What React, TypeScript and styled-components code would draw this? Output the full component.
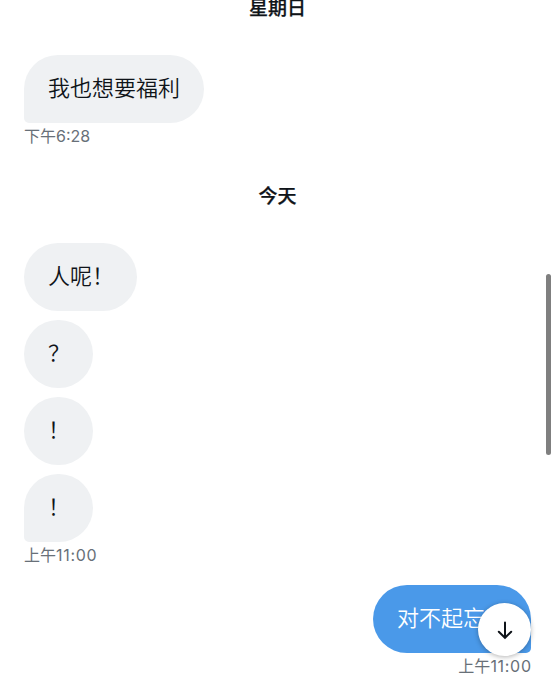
import React from 'react';
import styled, { createGlobalStyle } from 'styled-components';

const Global = createGlobalStyle`
  * { box-sizing: border-box; }
  body { margin: 0; background: #fff; overflow: hidden; }
`;

const Screen = styled.main`
  position: relative;
  display: flex;
  flex-direction: column;
  width: 555px;
  height: 680px;
  padding: 0 24px;
  overflow: hidden;
  background: #fff;
  color: #0f1419;
  font-family: Inter, 'Noto Sans CJK SC', sans-serif;
`;

const DayHeading = styled.h2<{ $gap: number }>`
  margin: ${(p) => p.$gap}px 0 0;
  height: 28px;
  line-height: 28px;
  text-align: center;
  font-size: 19px;
  font-weight: 500;
  -webkit-text-stroke: 0.25px currentColor;
`;

const Group = styled.section<{ $gap: number; $sent?: boolean }>`
  display: flex;
  flex-direction: column;
  align-items: ${(p) => (p.$sent ? 'flex-end' : 'flex-start')};
  gap: 9px;
  margin-top: ${(p) => p.$gap}px;
`;

const Bubble = styled.div<{ $width: number; $last?: boolean; $sent?: boolean }>`
  width: ${(p) => p.$width}px;
  height: 68px;
  padding: 0 24px;
  line-height: 67px;
  font-size: 22px;
  font-weight: 350;
  white-space: nowrap;
  color: ${(p) => (p.$sent ? '#fff' : '#0f1419')};
  background: ${(p) => (p.$sent ? '#4a99e9' : '#eff1f3')};
  border-radius: ${(p) => (p.$sent ? '34px 34px 5px 34px' : p.$last ? '34px 34px 34px 5px' : '34px')};
`;

const Time = styled.time<{ $spacing?: number }>`
  display: flex;
  margin-top: -9px;
  height: 26px;
  line-height: 26px;
  font-size: 16px;
  color: #687078;

  span {
    letter-spacing: ${(p) => p.$spacing ?? 0}px;
    margin-right: ${(p) => -(p.$spacing ?? 0)}px;
  }
`;

const ScrollThumb = styled.div`
  position: absolute;
  top: 274px;
  right: 4px;
  width: 5px;
  height: 181px;
  border-radius: 3px;
  background: #7f7f7f;
`;

const JumpButton = styled.button`
  position: absolute;
  left: 478px;
  top: 603px;
  display: grid;
  place-items: center;
  width: 53px;
  height: 53px;
  padding: 0;
  border: 0;
  border-radius: 50%;
  background: #fff;
  box-shadow: 0 1px 5px rgba(0, 0, 0, 0.3);
`;

export default function App() {
  return (
    <Screen>
      <Global />
      <DayHeading $gap={-5}>星期日</DayHeading>
      <Group $gap={32}>
        <Bubble $width={180} $last>我也想要福利</Bubble>
        <Time>下午<span>6:28</span></Time>
      </Group>
      <DayHeading $gap={34}>今天</DayHeading>
      <Group $gap={32}>
        <Bubble $width={113}>人呢！</Bubble>
        <Bubble $width={69}>？</Bubble>
        <Bubble $width={69}>！</Bubble>
        <Bubble $width={69} $last>！</Bubble>
        <Time $spacing={0.7}>上午<span>11:00</span></Time>
      </Group>
      <Group $gap={17} $sent>
        <Bubble $width={158} $sent>对不起忘了</Bubble>
        <Time $spacing={0.7}>上午<span>11:00</span></Time>
      </Group>
      <ScrollThumb />
      <JumpButton aria-label="下">
        <svg width="20" height="20" viewBox="0 0 20 20" fill="none" stroke="#0f1419" strokeWidth="2" strokeLinecap="round">
          <path d="M10 2.5v15.2M3.8 11.7L10 17.8l6.2-6.1" />
        </svg>
      </JumpButton>
    </Screen>
  );
}
